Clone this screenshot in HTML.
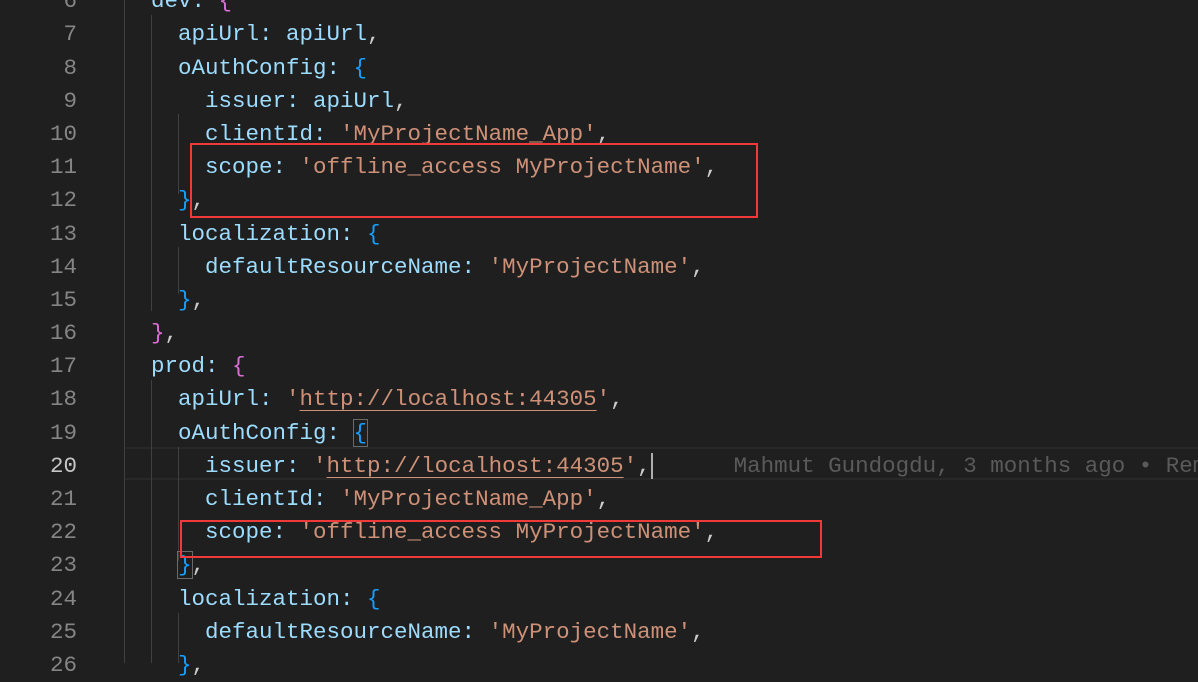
<!DOCTYPE html>
<html><head><meta charset="utf-8"><style>
html,body{margin:0;padding:0;background:#1f1f1f;width:1198px;height:663px;overflow:hidden;}
.w{position:absolute;left:0;top:-14.8px;width:1198px;}
.l{position:relative;height:33.2px;line-height:33.2px;font-family:"Liberation Mono",monospace;font-size:22.5px;color:#9cdcfe;white-space:pre;}
.n{position:absolute;left:0;width:77px;text-align:right;color:#858585;}
.c{position:absolute;left:124px;}
.s{color:#ce9178}.u{color:#ce9178;text-decoration:underline;text-underline-offset:5px;text-decoration-thickness:1px}
.p{color:#da70d6}.b{color:#179fff}.k{color:#cccccc}
.g{position:absolute;width:1px;background:#404040;}
.cur{position:absolute;left:124px;right:0;top:447px;height:33px;box-sizing:border-box;border-top:2px solid #282828;border-bottom:2px solid #282828;}
.box{position:absolute;border:2.5px solid #f03a3a;box-sizing:border-box;}
</style></head><body>
<div class="cur"></div>
<div class="g" style="left:124px;top:0;height:663px"></div>
<div class="g" style="left:151px;top:15px;height:296px"></div>
<div class="g" style="left:178px;top:114px;height:80px"></div>
<div class="g" style="left:178px;top:247px;height:47px"></div>
<div class="g" style="left:151px;top:380px;height:283px"></div>
<div class="g" style="left:178px;top:447px;height:114px"></div>
<div class="g" style="left:178px;top:613px;height:50px"></div>
<div class="w">
<div class="l"><span class="n">6</span><span class="c">  dev: <span class="p">{</span></span></div>
<div class="l"><span class="n">7</span><span class="c">    apiUrl: apiUrl<span class="k">,</span></span></div>
<div class="l"><span class="n">8</span><span class="c">    oAuthConfig: <span class="b">{</span></span></div>
<div class="l"><span class="n">9</span><span class="c">      issuer: apiUrl<span class="k">,</span></span></div>
<div class="l"><span class="n">10</span><span class="c">      clientId: <span class="s">'MyProjectName_App'</span><span class="k">,</span></span></div>
<div class="l"><span class="n">11</span><span class="c">      scope: <span class="s">'offline_access MyProjectName'</span><span class="k">,</span></span></div>
<div class="l"><span class="n">12</span><span class="c">    <span class="b">}</span><span class="k">,</span></span></div>
<div class="l"><span class="n">13</span><span class="c">    localization: <span class="b">{</span></span></div>
<div class="l"><span class="n">14</span><span class="c">      defaultResourceName: <span class="s">'MyProjectName'</span><span class="k">,</span></span></div>
<div class="l"><span class="n">15</span><span class="c">    <span class="b">}</span><span class="k">,</span></span></div>
<div class="l"><span class="n">16</span><span class="c">  <span class="p">}</span><span class="k">,</span></span></div>
<div class="l"><span class="n">17</span><span class="c">  prod: <span class="p">{</span></span></div>
<div class="l"><span class="n">18</span><span class="c">    apiUrl: <span class="s">'</span><span class="u">http://localhost:44305</span><span class="s">'</span><span class="k">,</span></span></div>
<div class="l"><span class="n">19</span><span class="c">    oAuthConfig: <span class="b" style="outline:1px solid #6a6a6a">{</span></span></div>
<div class="l"><span class="n" style="color:#c6c6c6">20</span><span class="c">      issuer: <span class="s">'</span><span class="u">http://localhost:44305</span><span class="s">'</span><span class="k">,</span><span style="border-left:2px solid #aeafad"></span>      <span style="color:#5a5a5a">Mahmut Gundogdu, 3 months ago • Remove</span></span></div>
<div class="l"><span class="n">21</span><span class="c">      clientId: <span class="s">'MyProjectName_App'</span><span class="k">,</span></span></div>
<div class="l"><span class="n">22</span><span class="c">      scope: <span class="s">'offline_access MyProjectName'</span><span class="k">,</span></span></div>
<div class="l"><span class="n">23</span><span class="c">    <span class="b" style="outline:1px solid #6a6a6a">}</span><span class="k">,</span></span></div>
<div class="l"><span class="n">24</span><span class="c">    localization: <span class="b">{</span></span></div>
<div class="l"><span class="n">25</span><span class="c">      defaultResourceName: <span class="s">'MyProjectName'</span><span class="k">,</span></span></div>
<div class="l"><span class="n">26</span><span class="c">    <span class="b">}</span><span class="k">,</span></span></div>
</div>
<div class="box" style="left:190px;top:143px;width:568px;height:75px"></div>
<div class="box" style="left:180px;top:520px;width:642px;height:38px"></div>
</body></html>
